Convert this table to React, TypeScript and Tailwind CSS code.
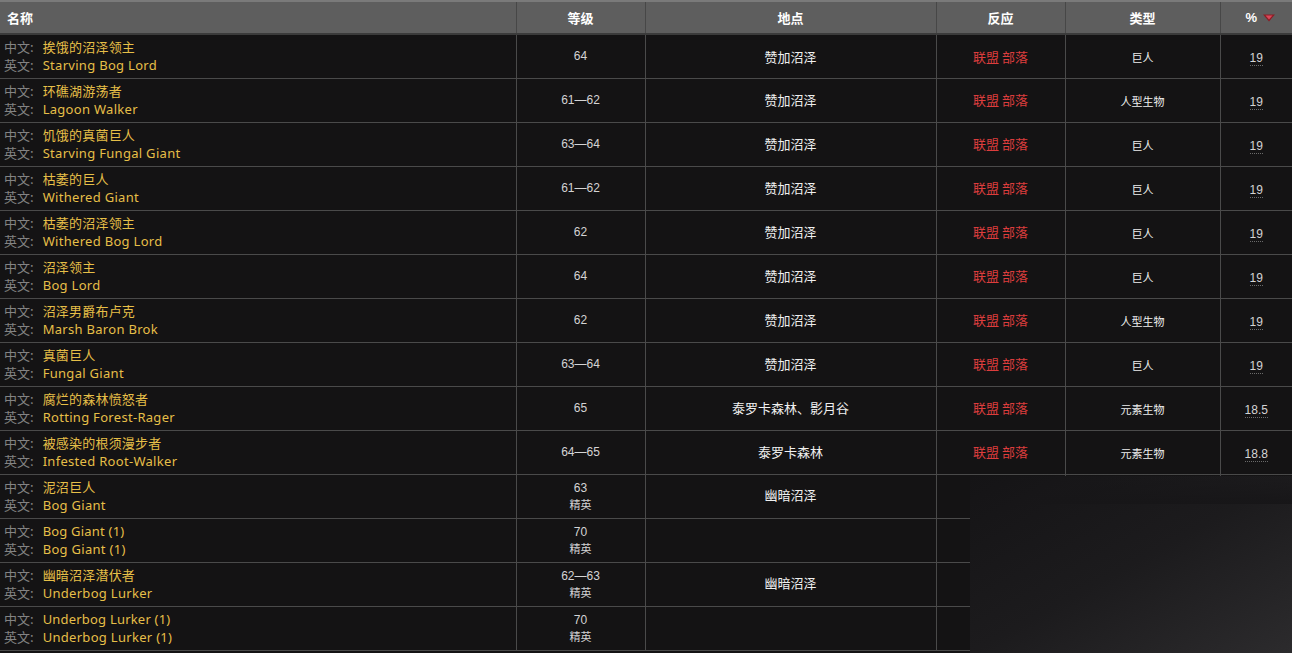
import React from "react";

type Row = {
  zh: string;
  en: string;
  level: string;
  elite?: boolean;
  zone: string;
  react?: boolean;
  kind?: string;
  pct?: string;
};

const rows: Row[] = [
  { zh: "挨饿的沼泽领主", en: "Starving Bog Lord", level: "64", zone: "赞加沼泽", react: true, kind: "巨人", pct: "19" },
  { zh: "环礁湖游荡者", en: "Lagoon Walker", level: "61—62", zone: "赞加沼泽", react: true, kind: "人型生物", pct: "19" },
  { zh: "饥饿的真菌巨人", en: "Starving Fungal Giant", level: "63—64", zone: "赞加沼泽", react: true, kind: "巨人", pct: "19" },
  { zh: "枯萎的巨人", en: "Withered Giant", level: "61—62", zone: "赞加沼泽", react: true, kind: "巨人", pct: "19" },
  { zh: "枯萎的沼泽领主", en: "Withered Bog Lord", level: "62", zone: "赞加沼泽", react: true, kind: "巨人", pct: "19" },
  { zh: "沼泽领主", en: "Bog Lord", level: "64", zone: "赞加沼泽", react: true, kind: "巨人", pct: "19" },
  { zh: "沼泽男爵布卢克", en: "Marsh Baron Brok", level: "62", zone: "赞加沼泽", react: true, kind: "人型生物", pct: "19" },
  { zh: "真菌巨人", en: "Fungal Giant", level: "63—64", zone: "赞加沼泽", react: true, kind: "巨人", pct: "19" },
  { zh: "腐烂的森林愤怒者", en: "Rotting Forest-Rager", level: "65", zone: "泰罗卡森林、影月谷", react: true, kind: "元素生物", pct: "18.5" },
  { zh: "被感染的根须漫步者", en: "Infested Root-Walker", level: "64—65", zone: "泰罗卡森林", react: true, kind: "元素生物", pct: "18.8" },
  { zh: "泥沼巨人", en: "Bog Giant", level: "63", elite: true, zone: "幽暗沼泽" },
  { zh: "Bog Giant (1)", en: "Bog Giant (1)", level: "70", elite: true, zone: "" },
  { zh: "幽暗沼泽潜伏者", en: "Underbog Lurker", level: "62—63", elite: true, zone: "幽暗沼泽" },
  { zh: "Underbog Lurker (1)", en: "Underbog Lurker (1)", level: "70", elite: true, zone: "" },
];

const cjk = "font-['Noto_Sans_CJK_SC',sans-serif]";
const th = "border-t-2 border-t-[#7a7a7a] border-b-2 border-b-[#3b3b3b] border-r border-r-[#474747]";

export default function App() {
  return (
    <div className="relative w-[1292px] h-[653px] overflow-hidden bg-[#141314] font-['Noto_Sans','Noto_Sans_CJK_SC',sans-serif]">
      <table className="w-[1292px] table-fixed border-collapse">
        <colgroup>
          <col className="w-[516px]" />
          <col className="w-[129px]" />
          <col className="w-[291px]" />
          <col className="w-[129px]" />
          <col className="w-[155px]" />
          <col className="w-[72px]" />
        </colgroup>
        <thead>
          <tr className="h-[33px] bg-[#5e5e5e] text-white text-[13px] font-bold">
            <th className={`${th} text-left pl-[7px] ${cjk}`}>名称</th>
            <th className={`${th} ${cjk}`}>等级</th>
            <th className={`${th} ${cjk}`}>地点</th>
            <th className={`${th} ${cjk}`}>反应</th>
            <th className={`${th} ${cjk}`}>类型</th>
            <th className="border-t-2 border-t-[#7a7a7a] border-b-2 border-b-[#3b3b3b]">
              <span className="inline-flex items-center gap-[6px] font-['Liberation_Sans',sans-serif] pl-[8px]">
                %
                <svg width="12" height="8" viewBox="0 0 12 8">
                  <path d="M0 0.5 H12 L6 7.5 Z" fill="#8c1c24" />
                  <path d="M2.5 1.5 H9.5 L6 5.5 Z" fill="#d9485a" />
                </svg>
              </span>
            </th>
          </tr>
        </thead>
        <tbody>
          {rows.map((r, i) => (
            <tr key={i} className="h-[44px]">
              <td className="border border-[#4a4a4a] border-l-0 pl-[4px] text-[13px] leading-[17px]">
                <div>
                  <span className={`text-[#838383] ${cjk}`}>中文:</span>
                  <span className="text-[#e6bf48] pl-[9px] tracking-[0.2px]">{r.zh}</span>
                </div>
                <div>
                  <span className={`text-[#838383] ${cjk}`}>英文:</span>
                  <span className="text-[#e6bf48] pl-[9px] tracking-[0.3px]">{r.en}</span>
                </div>
              </td>
              <td className="border border-[#4a4a4a] text-center text-[#d4d4d4]">
                <div className="font-['Liberation_Sans',sans-serif] text-[12px] leading-[16px]">{r.level}</div>
                {r.elite && <div className={`text-[11px] leading-[16px] ${cjk}`}>精英</div>}
              </td>
              <td className={`border border-[#4a4a4a] text-center text-[13px] text-[#f0f0f0] ${cjk} ${r.elite ? "pb-[2px]" : ""}`}>
                {r.zone}
              </td>
              <td className={`border border-[#4a4a4a] text-center text-[13px] text-[#dc3d3d] ${cjk}`}>
                {r.react ? "联盟 部落" : ""}
              </td>
              <td className={`border border-[#4a4a4a] text-center text-[11px] text-[#eeeeee] pt-[2px] ${cjk}`}>
                {r.kind ?? ""}
              </td>
              <td className="border border-[#4a4a4a] border-r-0 text-center">
                {r.pct && (
                  <span className="font-['Liberation_Sans',sans-serif] text-[12px] text-[#d4d4d4] border-b border-dotted border-b-[#6a6a6a]">
                    {r.pct}
                  </span>
                )}
              </td>
            </tr>
          ))}
        </tbody>
      </table>
      {/* blurred corner over the lower right rows */}
      <div className="absolute left-[970px] top-[476px] w-[322px] h-[177px] bg-gradient-to-br from-[#151416] via-[#1c1b1d] to-[#2c2b2d]" />
      <div className="absolute left-[1040px] top-[474px] w-[252px] h-[30px] bg-gradient-to-b from-transparent to-[#171618]" />
    </div>
  );
}
